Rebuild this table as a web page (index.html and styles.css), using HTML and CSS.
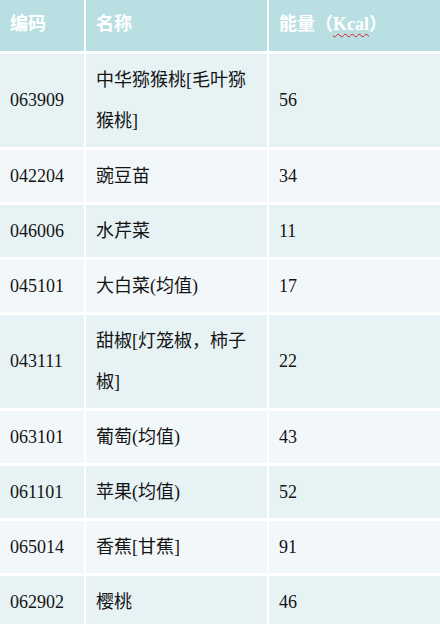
FILE: index.html
```html
<!DOCTYPE html>
<html lang="zh-CN">
<head>
<meta charset="utf-8">
<title>食物能量表</title>
<link rel="stylesheet" href="styles.css">
</head>
<body>
<div class="table">
  <div class="cell head">编码</div>
  <div class="cell head">名称</div>
  <div class="cell head">能量（<span class="spell">Kcal</span>）</div>

  <div class="cell odd">063909</div>
  <div class="cell odd">中华猕猴桃[毛叶猕猴桃]</div>
  <div class="cell odd">56</div>

  <div class="cell even">042204</div>
  <div class="cell even">豌豆苗</div>
  <div class="cell even">34</div>

  <div class="cell odd">046006</div>
  <div class="cell odd">水芹菜</div>
  <div class="cell odd">11</div>

  <div class="cell even">045101</div>
  <div class="cell even">大白菜(均值)</div>
  <div class="cell even">17</div>

  <div class="cell odd">043111</div>
  <div class="cell odd">甜椒[灯笼椒，柿子椒]</div>
  <div class="cell odd">22</div>

  <div class="cell even">063101</div>
  <div class="cell even">葡萄(均值)</div>
  <div class="cell even">43</div>

  <div class="cell odd">061101</div>
  <div class="cell odd">苹果(均值)</div>
  <div class="cell odd">52</div>

  <div class="cell even">065014</div>
  <div class="cell even">香蕉[甘蕉]</div>
  <div class="cell even">91</div>

  <div class="cell odd">062902</div>
  <div class="cell odd">樱桃</div>
  <div class="cell odd">46</div>
</div>
</body>
</html>
```

FILE: styles.css
```css
html, body {
  margin: 0;
  padding: 0;
  background: #ffffff;
}

body {
  font-family: "Liberation Serif", "Noto Sans CJK SC", serif;
  font-size: 18px;
  color: #141414;
}

.table {
  display: grid;
  grid-template-columns: 84px 181px 1fr;
  column-gap: 2px;
  row-gap: 3px;
}

.cell {
  display: flex;
  align-items: center;
  padding: 5.5px 10px;
  line-height: 41px;
}

.head {
  background: #b9dfe3;
  color: #ffffff;
  font-weight: bold;
  height: 51px;
  padding-top: 0;
  padding-bottom: 3px;
  box-sizing: border-box;
  line-height: 1;
}

.odd {
  background: #e6f2f4;
}

.even {
  background: #f2f8fa;
}

.spell {
  text-decoration: underline wavy #e02020;
  text-decoration-thickness: 1px;
  text-underline-offset: 3px;
}
```
